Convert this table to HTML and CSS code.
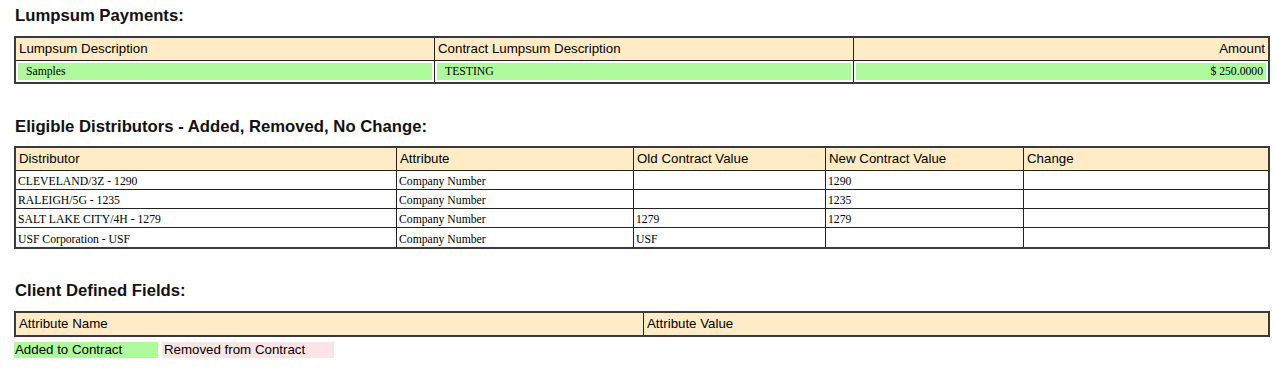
FILE: index.html
```html
<!DOCTYPE html>
<html>
<head>
<meta charset="utf-8">
<link rel="stylesheet" href="styles.css">
</head>
<body>
<div class="page">
  <h2 class="section-title first">Lumpsum Payments:</h2>
  <table class="grid lumpsum">
    <colgroup><col class="w-third"><col class="w-third"><col></colgroup>
    <thead>
      <tr><th>Lumpsum Description</th><th>Contract Lumpsum Description</th><th class="right">Amount</th></tr>
    </thead>
    <tbody>
      <tr class="added"><td class="pad">Samples</td><td class="pad">TESTING</td><td class="right">$ 250.0000</td></tr>
    </tbody>
  </table>

  <h2 class="section-title second">Eligible Distributors - Added, Removed, No Change:</h2>
  <table class="grid dist">
    <colgroup><col class="c1"><col class="c2"><col class="c3"><col class="c4"><col></colgroup>
    <thead>
      <tr><th>Distributor</th><th>Attribute</th><th>Old Contract Value</th><th>New Contract Value</th><th>Change</th></tr>
    </thead>
    <tbody>
      <tr><td>CLEVELAND/3Z - 1290</td><td>Company Number</td><td></td><td>1290</td><td></td></tr>
      <tr><td>RALEIGH/5G - 1235</td><td>Company Number</td><td></td><td>1235</td><td></td></tr>
      <tr><td>SALT LAKE CITY/4H - 1279</td><td>Company Number</td><td>1279</td><td>1279</td><td></td></tr>
      <tr><td>USF Corporation - USF</td><td>Company Number</td><td>USF</td><td></td><td></td></tr>
    </tbody>
  </table>

  <h2 class="section-title third">Client Defined Fields:</h2>
  <table class="grid client">
    <colgroup><col class="half"><col></colgroup>
    <thead>
      <tr><th>Attribute Name</th><th>Attribute Value</th></tr>
    </thead>
  </table>

  <div class="legend">
    <span class="key key-added">Added to Contract</span>
    <span class="key key-removed">Removed from Contract</span>
  </div>
</div>
</body>
</html>
```

FILE: styles.css
```css
html, body {
  margin: 0;
  padding: 0;
  background: #fff;
}
.page {
  padding: 0 7px 0 14px;
  font-family: "Liberation Sans", Arial, sans-serif;
  color: #000;
}
.section-title {
  font-family: "Liberation Sans", Arial, sans-serif;
  font-size: 16.7px;
  font-weight: bold;
  line-height: 19px;
  margin: 0 0 0 1px;
  color: #111;
}
.section-title.first { padding-top: 6px; margin-bottom: 11px; }
.section-title.second { margin-top: 33px; margin-bottom: 10px; }
.section-title.third { margin-top: 32px; margin-bottom: 11px; }

.grid {
  width: 1256px;
  table-layout: fixed;
  border-collapse: separate;
  border-spacing: 0;
  border: 2px solid #3a3a3a;
}
.grid th {
  background: #ffebc6;
  font-family: "Liberation Sans", Arial, sans-serif;
  font-weight: normal;
  font-size: 13.3px;
  text-align: left;
  height: 22px;
  padding: 0 3px;
  border-right: 1px solid #222;
  line-height: 22px;
  white-space: nowrap;
}
.grid th:last-child,
.grid td:last-child { border-right: none; }
.grid thead tr th { border-bottom: 1px solid #222; }
.client thead tr th { border-bottom: none; }
.grid td {
  font-family: "Liberation Serif", "Times New Roman", serif;
  font-size: 11.7px;
  height: 18px;
  padding: 0 2px;
  line-height: 15px;
  vertical-align: bottom;
  border-right: 1px solid #222;
  border-bottom: 1px solid #222;
  white-space: nowrap;
}
.grid tbody tr:last-child td { border-bottom: none; height: 19px; }
.right { text-align: right !important; }

.w-third { width: 419px; }
.c1 { width: 381px; }
.c2 { width: 237px; }
.c3 { width: 192px; }
.c4 { width: 198px; }
.half { width: 628px; }

.lumpsum tbody td,
.lumpsum tbody tr:last-child td {
  background: #aefa9c;
  box-shadow: inset 0 0 0 2px #fff;
  height: 21px;
  line-height: 21px;
  vertical-align: middle;
  padding: 0 5px 0 10px;
}
.lumpsum tbody td.pad { padding-left: 11px; }

.legend {
  display: flex;
  gap: 4px;
  margin-top: 5px;
  font-family: "Liberation Sans", Arial, sans-serif;
  font-size: 13.3px;
  line-height: 16px;
}
.key {
  display: block;
  height: 16px;
  padding-left: 1px;
  box-sizing: border-box;
}
.key-added { background: #aefa9c; width: 144px; }
.key-removed { background: #fde5e6; width: 172px; padding-left: 2px; }
```
